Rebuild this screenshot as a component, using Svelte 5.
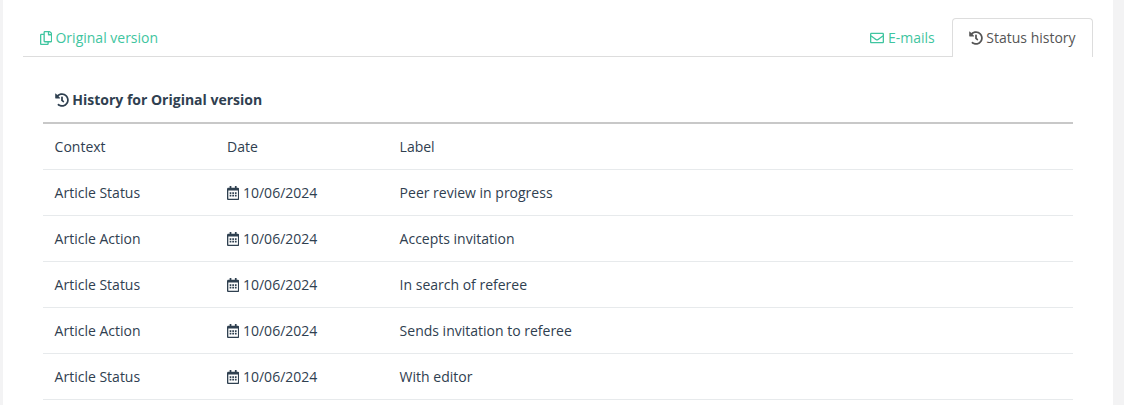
<script>
  const rows = [
    { context: 'Article Status', date: '10/06/2024', label: 'Peer review in progress' },
    { context: 'Article Action', date: '10/06/2024', label: 'Accepts invitation' },
    { context: 'Article Status', date: '10/06/2024', label: 'In search of referee' },
    { context: 'Article Action', date: '10/06/2024', label: 'Sends invitation to referee' },
    { context: 'Article Status', date: '10/06/2024', label: 'With editor' }
  ]
</script>

{#snippet historyIcon()}
  <svg class="icon wide" viewBox="0 0 512 512">
    <path fill="currentColor" d="M504 255.531c.253 136.640-111.180 248.372-247.820 248.468-59.015.042-113.223-20.530-155.822-54.911-11.077-8.940-11.905-25.541-1.839-35.607l11.267-11.267c8.609-8.609 22.353-9.551 31.891-1.984C173.062 425.135 212.781 440 256 440c101.705 0 184-82.311 184-184 0-101.705-82.311-184-184-184-48.814 0-93.149 18.969-126.068 49.932l50.754 50.754c10.080 10.080 2.941 27.314-11.313 27.314H24c-8.837 0-16-7.163-16-16V38.627c0-14.254 17.234-21.393 27.314-11.314l49.372 49.372C129.209 31.084 189.552 8 256 8c136.810 0 247.747 110.780 248 247.531zm-180.912 78.784l9.823-12.630c8.138-10.463 6.253-25.542-4.210-33.679L288 256.349V152c0-13.255-10.745-24-24-24h-16c-13.255 0-24 10.745-24 24v135.651l65.409 50.874c10.463 8.137 25.541 6.253 33.679-4.210z" />
  </svg>
{/snippet}

<div class="page">
  <div class="card">
    <div class="tabs">
      <a class="tab" href="#original">
        <svg class="icon" viewBox="0 0 448 512">
          <path fill="currentColor" d="M433.941 65.941l-51.882-51.882A48 48 0 0 0 348.118 0H176c-26.510 0-48 21.490-48 48v48H48c-26.510 0-48 21.490-48 48v320c0 26.510 21.490 48 48 48h224c26.510 0 48-21.490 48-48v-48h80c26.510 0 48-21.490 48-48V99.882a48 48 0 0 0-14.059-33.941zM266 464H54a6 6 0 0 1-6-6V150a6 6 0 0 1 6-6h74v224c0 26.510 21.490 48 48 48h96v42a6 6 0 0 1-6 6zm128-96H182a6 6 0 0 1-6-6V54a6 6 0 0 1 6-6h106v88c0 13.255 10.745 24 24 24h88v202a6 6 0 0 1-6 6zm6-256h-64V48h9.632c1.591 0 3.117.632 4.243 1.757l48.368 48.368a6 6 0 0 1 1.757 4.243V112z" />
        </svg>
        Original version
      </a>
      <div class="spacer"></div>
      <a class="tab" href="#emails">
        <svg class="icon wide" viewBox="0 0 512 512">
          <path fill="currentColor" d="M464 64H48C21.490 64 0 85.490 0 112v288c0 26.510 21.490 48 48 48h416c26.510 0 48-21.490 48-48V112c0-26.510-21.490-48-48-48zm0 48v40.805c-22.422 18.259-58.168 46.651-134.587 106.490-16.841 13.247-50.201 45.072-73.413 44.701-23.208.375-56.579-31.459-73.413-44.701C106.180 199.465 70.425 171.067 48 152.805V112h416zM48 400V214.398c22.914 18.251 55.409 43.862 104.938 82.646 21.857 17.205 60.134 55.186 103.062 54.955 42.717.231 80.509-37.199 103.053-54.947 49.528-38.783 82.032-64.401 104.947-82.653V400H48z" />
        </svg>
        E-mails
      </a>
      <a class="tab active" href="#history">
        {@render historyIcon()}
        Status history
      </a>
    </div>

    <div class="panel">
      <h5>{@render historyIcon()} History for Original version</h5>
      <table>
        <thead>
          <tr>
            <th>Context</th>
            <th>Date</th>
            <th>Label</th>
          </tr>
        </thead>
        <tbody>
          {#each rows as row}
            <tr>
              <td>{row.context}</td>
              <td>
                <svg class="icon" viewBox="0 0 448 512">
                  <path fill="currentColor" d="M148 288h-40c-6.600 0-12-5.400-12-12v-40c0-6.600 5.400-12 12-12h40c6.600 0 12 5.400 12 12v40c0 6.600-5.400 12-12 12zm108-12v-40c0-6.600-5.400-12-12-12h-40c-6.600 0-12 5.400-12 12v40c0 6.600 5.400 12 12 12h40c6.600 0 12-5.400 12-12zm96 0v-40c0-6.600-5.400-12-12-12h-40c-6.600 0-12 5.400-12 12v40c0 6.600 5.400 12 12 12h40c6.600 0 12-5.400 12-12zm-96 96v-40c0-6.600-5.400-12-12-12h-40c-6.600 0-12 5.400-12 12v40c0 6.600 5.400 12 12 12h40c6.600 0 12-5.400 12-12zm-96 0v-40c0-6.600-5.400-12-12-12h-40c-6.600 0-12 5.400-12 12v40c0 6.600 5.400 12 12 12h40c6.600 0 12-5.400 12-12zm192 0v-40c0-6.600-5.400-12-12-12h-40c-6.600 0-12 5.400-12 12v40c0 6.600 5.400 12 12 12h40c6.600 0 12-5.400 12-12zm96-260v352c0 26.500-21.500 48-48 48H48c-26.500 0-48-21.500-48-48V112c0-26.500 21.500-48 48-48h48V12c0-6.600 5.400-12 12-12h40c6.600 0 12 5.400 12 12v52h128V12c0-6.600 5.400-12 12-12h40c6.600 0 12 5.400 12 12v52h48c26.500 0 48 21.500 48 48zm-48 346V160H48v298c0 3.300 2.700 6 6 6h340c3.300 0 6-2.700 6-6z" />
                </svg>
                {row.date}
              </td>
              <td>{row.label}</td>
            </tr>
          {/each}
        </tbody>
      </table>
    </div>
  </div>
</div>

<style>
  :global(body) {
    margin: 0;
    background: #f3f3f4;
    overflow: hidden;
  }

  .page {
    height: 405px;
    overflow: hidden;
    padding: 0 11.4px 0 2.6px;
    font-family: "Open Sans", sans-serif;
    font-size: 14px;
    color: #2f4050;
  }

  .card {
    background: #fff;
    padding: 18px 20px 0;
    height: 100%;
  }

  .tabs {
    display: flex;
    height: 38px;
    border-bottom: 1px solid #ddd;
  }

  .spacer {
    flex: 1;
  }

  .tab {
    display: block;
    padding: 9px 16px 0;
    height: 29px;
    line-height: 20px;
    color: #3fc5a0;
    text-decoration: none;
    white-space: nowrap;
    border: 1px solid transparent;
    border-bottom: 0;
    border-radius: 4px 4px 0 0;
  }

  .active {
    color: #555;
    background: #fff;
    border-color: #ddd;
    height: 39px;
    box-sizing: border-box;
  }

  .icon {
    width: 12.25px;
    height: 14px;
    vertical-align: -1.75px;
  }

  .wide {
    width: 14px;
  }

  .panel {
    padding: 0 20px;
  }

  h5 {
    margin: 0;
    padding: 33px 12px 0;
    height: 32px;
    line-height: 20px;
    font-size: 14px;
    font-weight: 700;
  }

  table {
    width: 100%;
    border-collapse: collapse;
    table-layout: fixed;
    border-top: 2px solid #c8c8c8;
  }

  th:nth-child(1), th:nth-child(2) {
    width: 172.5px;
    box-sizing: border-box;
  }

  th, td {
    padding: 0 12px;
    height: 45px;
    text-align: left;
    font-weight: 400;
    border-bottom: 1px solid #e7eaec;
  }
</style>
